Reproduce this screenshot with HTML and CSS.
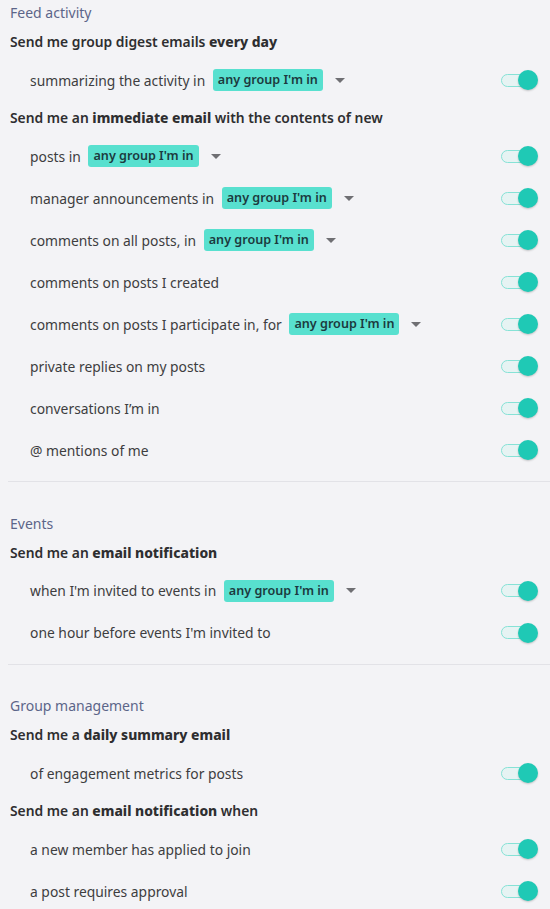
FILE: index.html
```html
<!DOCTYPE html>
<html>
<head>
<meta charset="utf-8">
<link rel="stylesheet" href="styles.css">
</head>
<body>
<div class="page">
  <section class="section first">
    <div class="title">Feed activity</div>
    <div class="head">Send me group digest emails <b>every day</b></div>
    <div class="row"><div class="label">summarizing the activity in <span class="pill">any group I'm in</span><span class="caret"></span></div><span class="toggle"><span class="knob"></span></span></div>
    <div class="head">Send me an <b>immediate email</b> with the contents of new</div>
    <div class="row"><div class="label">posts in <span class="pill">any group I'm in</span><span class="caret"></span></div><span class="toggle"><span class="knob"></span></span></div>
    <div class="row"><div class="label">manager announcements in <span class="pill">any group I'm in</span><span class="caret"></span></div><span class="toggle"><span class="knob"></span></span></div>
    <div class="row"><div class="label">comments on all posts, in <span class="pill">any group I'm in</span><span class="caret"></span></div><span class="toggle"><span class="knob"></span></span></div>
    <div class="row"><div class="label">comments on posts I created</div><span class="toggle"><span class="knob"></span></span></div>
    <div class="row"><div class="label">comments on posts I participate in, for <span class="pill">any group I'm in</span><span class="caret"></span></div><span class="toggle"><span class="knob"></span></span></div>
    <div class="row"><div class="label">private replies on my posts</div><span class="toggle"><span class="knob"></span></span></div>
    <div class="row"><div class="label">conversations I’m in</div><span class="toggle"><span class="knob"></span></span></div>
    <div class="row"><div class="label">@ mentions of me</div><span class="toggle"><span class="knob"></span></span></div>
  </section>
  <section class="section">
    <div class="title">Events</div>
    <div class="head">Send me an <b>email notification</b></div>
    <div class="row"><div class="label">when I'm invited to events in <span class="pill">any group I'm in</span><span class="caret"></span></div><span class="toggle"><span class="knob"></span></span></div>
    <div class="row"><div class="label">one hour before events I'm invited to</div><span class="toggle"><span class="knob"></span></span></div>
  </section>
  <section class="section last">
    <div class="title">Group management</div>
    <div class="head">Send me a <b>daily summary email</b></div>
    <div class="row"><div class="label">of engagement metrics for posts</div><span class="toggle"><span class="knob"></span></span></div>
    <div class="head">Send me an <b>email notification</b> when</div>
    <div class="row"><div class="label">a new member has applied to join</div><span class="toggle"><span class="knob"></span></span></div>
    <div class="row"><div class="label">a post requires approval</div><span class="toggle"><span class="knob"></span></span></div>
  </section>
</div>
</body>
</html>
```
FILE: styles.css
```css
html, body {
  margin: 0;
  padding: 0;
  background: #f3f3f6;
}
body {
  font-family: "Noto Sans", "Open Sans", sans-serif;
  font-size: 13.85px;
  color: #333;
  width: 550px;
  overflow: hidden;
}
.page {
  padding-left: 8px;
}
.section {
  padding: 28.5px 0 10px 0;
  border-bottom: 1px solid #e2e2e7;
}
.section.first {
  padding-top: 0;
}
.section.last {
  border-bottom: none;
}
.title {
  height: 25px;
  line-height: 25px;
  padding-left: 2px;
  color: #5c6589;
  font-size: 14px;
}
.head {
  height: 34px;
  line-height: 33px;
  padding-left: 2px;
  font-weight: 580;
  color: #2e2e30;
}
.head b {
  font-weight: 780;
}
.row {
  height: 42px;
  display: flex;
  align-items: center;
  justify-content: space-between;
  padding-left: 22px;
  padding-right: 12px;
}
.label {
  display: flex;
  align-items: center;
  color: #3d3d40;
  white-space: pre;
}
.pill {
  display: inline-block;
  margin-left: 4px;
  height: 22px;
  line-height: 22px;
  padding: 0 5px;
  border-radius: 3px;
  background: #58e0cf;
  color: #1c3a3e;
  font-size: 12.6px;
  font-weight: 600;
}
.caret {
  display: inline-block;
  width: 0;
  height: 0;
  margin-left: 12px;
  border-left: 5px solid transparent;
  border-right: 5px solid transparent;
  border-top: 5px solid #6f6f73;
}
.toggle {
  position: relative;
  width: 34px;
  height: 13px;
  margin-right: 3px;
  border: 1.5px solid #86e2d6;
  border-radius: 8px;
  background: #e6f3f3;
  box-sizing: border-box;
}
.knob {
  position: absolute;
  right: -4px;
  top: 50%;
  width: 20px;
  height: 20px;
  margin-top: -10px;
  border-radius: 50%;
  background: #1fc9b5;
  box-shadow: 0 1px 2px rgba(0,0,0,0.2);
}
```
